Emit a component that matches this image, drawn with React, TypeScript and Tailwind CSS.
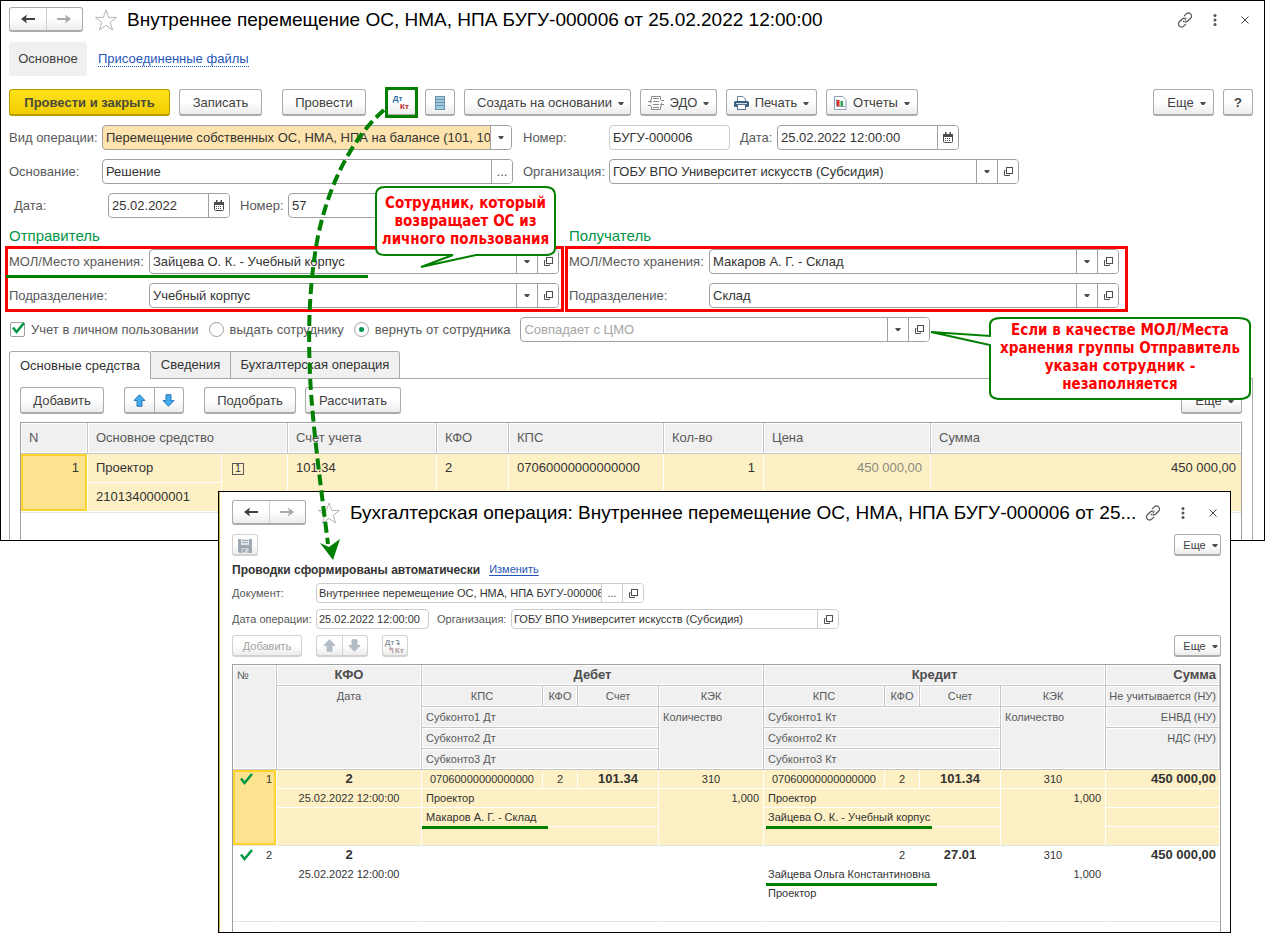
import { useState, type ReactNode } from "react";
import clsx from "clsx";

type Addon = "drop" | "open" | "dots" | "calendar";

/* ---------- icons ---------- */

function Chevron() {
  return (
    <svg width="6" height="3" viewBox="0 0 6 3" aria-hidden="true" className="shrink-0">
      <path d="M0 0h6L4 3H2z" fill="#4d4d4d" />
    </svg>
  );
}

function OpenIcon() {
  return (
    <svg width="9" height="9" viewBox="0 0 9 9" fill="none" stroke="#4d4d4d" aria-hidden="true">
      <rect x="2.500" y=".5" width="6" height="6" />
      <path d="M1.500 3.500H.5v5h5V7.500" />
    </svg>
  );
}

function CalendarIcon() {
  return (
    <svg width="10" height="11" viewBox="0 0 10 11" aria-hidden="true">
      <rect x=".5" y="2.500" width="9" height="8" rx="1" fill="#fff" stroke="#4d4d4d" />
      <path d="M0 2h10v3H0zM2 0h1.500v3H2zM6.500 0H8v3H6.500z" fill="#4d4d4d" />
      <path d="M2 6.500h6M2 8.500h6" stroke="#4d4d4d" strokeDasharray="1 1" />
    </svg>
  );
}

function NavArrow({ muted, flip }: { muted?: boolean; flip?: boolean }) {
  return (
    <svg width="14" height="10" viewBox="0 0 14 10" aria-hidden="true" className={clsx(flip && "rotate-180")}>
      <path d="M14 4v2H5l1 3.500L0 5 6 .5 5 4z" fill={muted ? "#a9a9a9" : "#404040"} />
    </svg>
  );
}

function Star() {
  return (
    <svg width="24" height="24" viewBox="0 0 24 24" aria-hidden="true" className="shrink-0">
      <path
        d="M12 2l2.600 7.400H22.500l-6.300 4.900 2.400 7.700L12 17.400 5.400 22l2.400-7.700L1.500 9.400h7.900z"
        fill="#fff"
        stroke="#b4b4b4"
      />
    </svg>
  );
}

function LinkIcon() {
  return (
    <svg width="16" height="16" viewBox="0 0 16 16" fill="none" stroke="#555" strokeWidth="1.200" aria-hidden="true">
      <path d="M7 4.200l2.300-2.300a2.900 2.900 0 0 1 4.300 0 2.900 2.900 0 0 1 0 4.300L10.700 9a2.900 2.900 0 0 1-3.200.6" />
      <path d="M9 11.800l-2.300 2.300a2.900 2.900 0 0 1-4.300 0 2.900 2.900 0 0 1 0-4.300L5.300 7a2.900 2.900 0 0 1 3.200-.6" />
      <path d="M6 10l4-4" strokeDasharray="1.500 1" />
    </svg>
  );
}

function MoveArrow({ down, muted }: { down?: boolean; muted?: boolean }) {
  return (
    <svg width="13" height="13" viewBox="0 0 13 13" aria-hidden="true" className={clsx(down && "rotate-180")}>
      <path
        d="M6.500.7L12 6.500H9v5.800H4V6.500H1z"
        fill={muted ? "#b3bcc4" : "#42aaf0"}
        stroke={muted ? "#b3bcc4" : "#2f78b5"}
      />
    </svg>
  );
}

function ListIcon() {
  return (
    <svg width="10" height="14" viewBox="0 0 10 14" aria-hidden="true">
      <path d="M0 0h10v14H0z" fill="#a3cbe0" />
      <path d="M0 .5h10M0 3.500h10M0 6.500h10M0 9.500h10M0 13.500h10M.5 0v14M9.500 0v14" stroke="#6b93ad" />
    </svg>
  );
}

function ExchangeIcon() {
  return (
    <svg width="16" height="14" viewBox="0 0 16 14" fill="none" stroke="#8c8c8c" aria-hidden="true">
      <path d="M3.500 4V.5h9V4M3.500 10v3.500h9V10M5 2.500h6M5 11.500h6M5 5.500h6M5 8.500h6" />
      <path d="M0 5.500h3M13 4.500h3M0 9.500h3M13 8.500h3" />
      <path d="M2 3.500l2 2-2 2zM14 6.500l-2 2 2 2z" fill="#8c8c8c" stroke="none" />
    </svg>
  );
}

function PrinterIcon() {
  return (
    <svg width="15" height="14" viewBox="0 0 15 14" aria-hidden="true">
      <path d="M3.500 5V.5h5.500l2.500 2.500v2" fill="#fff" stroke="#6c8296" />
      <rect x="0" y="5" width="15" height="6" rx="1.500" fill="#3d5f80" />
      <path d="M2 7.500h11" stroke="#cfdbe6" />
      <rect x="3.500" y="8.500" width="8" height="5" fill="#fff" stroke="#56728d" />
    </svg>
  );
}

function ChartIcon() {
  return (
    <svg width="13" height="14" viewBox="0 0 13 14" aria-hidden="true">
      <path d="M.5.5h8.500l3 3v10H.5z" fill="#fff" stroke="#8ba2b3" />
      <path d="M3 4h2.500v6H3z" fill="#e22d1f" />
      <path d="M6.500 5H9v5H6.500z" fill="#22a04a" />
      <path d="M2.500 3v7.500H11" fill="none" stroke="#8ba2b3" />
    </svg>
  );
}

function SaveIcon() {
  return (
    <svg width="14" height="14" viewBox="0 0 14 14" aria-hidden="true">
      <path d="M0 0h14v14H1.500L0 12.500z" fill="#9fa9b3" />
      <path d="M3 0h8v6H3z" fill="#e3e7ea" />
      <path d="M4 1.500h6M4 3.500h6" stroke="#9fa9b3" />
      <path d="M3.500 9h7v5h-7z" fill="#c9d0d6" />
      <path d="M5 10h2v3H5z" fill="#9fa9b3" />
    </svg>
  );
}

function CheckMark({ className }: { className?: string }) {
  return (
    <svg width="13" height="12" viewBox="0 0 13 12" aria-hidden="true" className={className}>
      <path d="M1 5.500l3.500 4.500L12 1" fill="none" stroke="#009646" strokeWidth="2.500" />
    </svg>
  );
}

/* ---------- controls ---------- */

interface BtnProps {
  children: ReactNode;
  className?: string;
  drop?: boolean;
  small?: boolean;
  disabled?: boolean;
  label?: string;
}

function Btn({ children, className, drop, small, disabled, label }: BtnProps) {
  return (
    <button
      type="button"
      aria-label={label}
      disabled={disabled}
      className={clsx(
        "flex shrink-0 items-center justify-center gap-1.5 rounded-[3px] border border-b-2 bg-linear-to-b from-white from-50% to-[#ececec] pt-0.5 whitespace-nowrap",
        small ? "h-[22px] text-[11px]" : "h-[27px] text-[13px]",
        disabled ? "border-[#d2d2d2] text-[#a3a3a3]" : "border-[#ababab] text-[#404040]",
        className,
      )}
    >
      {children}
      {drop && <Chevron />}
    </button>
  );
}

const ADDON_LABEL: Record<Addon, string> = {
  drop: "Выбрать из списка",
  open: "Открыть",
  dots: "Выбрать",
  calendar: "Календарь",
};

interface FieldProps {
  id: string;
  label?: string;
  value: string;
  /** Widths of the caption and of the box, as full class names. */
  labelClass?: string;
  boxClass: string;
  addons?: Addon[];
  small?: boolean;
  light?: boolean;
  accent?: boolean;
  muted?: boolean;
}

function Field({ id, label, value, labelClass, boxClass, addons = [], small, light, accent, muted }: FieldProps) {
  const border = light ? "border-[#cccccc]" : "border-[#a0a0a0]";
  const control = clsx(
    "h-full w-full min-w-0 flex-1 appearance-none overflow-hidden bg-transparent text-clip outline-none",
    small ? "pl-0.5" : "pl-[3px]",
    muted ? "text-[#a6a6a6]" : "text-[#333333]",
  );
  return (
    <div className={clsx("flex shrink-0 items-center", small ? "text-[11px]" : "text-[13px]")}>
      {label && (
        <label htmlFor={id} className={clsx("shrink-0 whitespace-nowrap text-[#595959]", labelClass)}>
          {label}
        </label>
      )}
      <div
        className={clsx(
          "flex shrink-0 overflow-hidden rounded-[4px] border",
          border,
          small ? "h-5" : "h-[25px]",
          accent ? "bg-[#fde3ad]" : "bg-white",
          boxClass,
        )}
      >
        {addons.includes("drop") ? (
          <select id={id} aria-label={label ?? value} className={control}>
            <option>{value}</option>
          </select>
        ) : (
          <input id={id} aria-label={label ?? value} defaultValue={value} className={control} />
        )}
        {addons.map((a) => (
          <button
            key={a}
            type="button"
            aria-label={ADDON_LABEL[a]}
            className={clsx("flex w-[21px] shrink-0 items-center justify-center border-l bg-white text-[#4d4d4d]", border)}
          >
            {a === "drop" && <Chevron />}
            {a === "open" && <OpenIcon />}
            {a === "dots" && "..."}
            {a === "calendar" && <CalendarIcon />}
          </button>
        ))}
      </div>
    </div>
  );
}

function WindowHeader({ title }: { title: string }) {
  return (
    <header className="flex h-[25px] items-center">
      <div className="flex h-full w-[74px] shrink-0 overflow-hidden rounded-[3px] border border-b-2 border-[#ababab] bg-linear-to-b from-white from-50% to-[#ececec]">
        <button type="button" aria-label="Назад" className="flex flex-1 items-center justify-center border-r border-[#cfcfcf]">
          <NavArrow />
        </button>
        <button type="button" aria-label="Вперед" className="flex flex-1 items-center justify-center">
          <NavArrow muted flip />
        </button>
      </div>
      <button type="button" aria-label="В избранное" className="mr-[9px] ml-[11px]">
        <Star />
      </button>
      <h1 className="min-w-0 flex-1 text-[19px] leading-6 whitespace-nowrap text-black">{title}</h1>
      <button type="button" aria-label="Ссылка" className="flex w-[30px] shrink-0 justify-center">
        <LinkIcon />
      </button>
      <button type="button" aria-label="Меню" className="flex w-[30px] shrink-0 justify-center">
        <svg width="4" height="12" viewBox="0 0 4 12" fill="#555" aria-hidden="true">
          <circle cx="2" cy="1.500" r="1.500" />
          <circle cx="2" cy="6" r="1.500" />
          <circle cx="2" cy="10.500" r="1.500" />
        </svg>
      </button>
      <button type="button" aria-label="Закрыть" className="flex w-[30px] shrink-0 justify-center">
        <svg width="8" height="8" viewBox="0 0 8 8" stroke="#444" aria-hidden="true">
          <path d="M.5.5l7 7M7.500.5l-7 7" />
        </svg>
      </button>
    </header>
  );
}

function MovePair({ small, muted }: { small?: boolean; muted?: boolean }) {
  return (
    <div
      className={clsx(
        "flex shrink-0 rounded-[3px] border border-b-2 bg-linear-to-b from-white from-50% to-[#ececec]",
        small ? "h-[22px] w-[52px]" : "h-[27px] w-[60px]",
        muted ? "border-[#d2d2d2]" : "border-[#ababab]",
      )}
    >
      <button
        type="button"
        aria-label="Вверх"
        disabled={muted}
        className={clsx("flex flex-1 items-center justify-center border-r", muted ? "border-[#d2d2d2]" : "border-[#ababab]")}
      >
        <MoveArrow muted={muted} />
      </button>
      <button type="button" aria-label="Вниз" disabled={muted} className="flex flex-1 items-center justify-center">
        <MoveArrow down muted={muted} />
      </button>
    </div>
  );
}

/* ---------- document window ---------- */

function PartyGroup({ id, place, unit, className }: { id: string; place: string; unit: string; className?: string }) {
  return (
    <div className={clsx("relative flex flex-col gap-[9px] border-3 border-[#ff0000] pb-px pl-px", className)}>
      <Field id={`${id}-place`} label="МОЛ/Место хранения:" value={place} labelClass="w-[140px]" boxClass="w-[410px]" addons={["drop", "open"]} />
      <Field id={`${id}-unit`} label="Подразделение:" value={unit} labelClass="w-[140px]" boxClass="w-[410px]" addons={["drop", "open"]} />
    </div>
  );
}

function PersonalUse() {
  const [mode, setMode] = useState("return");
  const modes = [
    { id: "issue", text: "выдать сотруднику" },
    { id: "return", text: "вернуть от сотрудника" },
  ];
  return (
    <div className="mt-[5px] flex h-[25px] items-center text-[13px] whitespace-nowrap text-[#595959]">
      <label className="ml-px flex items-center gap-1.5">
        <span className="relative flex">
          <input
            type="checkbox"
            defaultChecked
            className="peer size-[15px] appearance-none rounded-[2px] border border-[#a0a0a0] bg-white"
          />
          <CheckMark className="pointer-events-none absolute top-0 left-0.5 hidden peer-checked:block" />
        </span>
        Учет в личном пользовании
      </label>
      {modes.map((m) => (
        <label key={m.id} className="ml-[10px] flex items-center gap-1.5">
          <span className="relative flex items-center justify-center">
            <input
              type="radio"
              name="mode"
              checked={mode === m.id}
              onChange={() => setMode(m.id)}
              className="peer size-[15px] appearance-none rounded-full border border-[#a0a0a0] bg-white"
            />
            <span className="pointer-events-none absolute hidden size-[5px] rounded-full bg-[#009646] peer-checked:block" />
          </span>
          {m.text}
        </label>
      ))}
      <div className="ml-[10px]">
        <Field id="cmo" value="Совпадает с ЦМО" boxClass="w-[410px]" addons={["drop", "open"]} muted />
      </div>
    </div>
  );
}

function AssetsTable() {
  const th = "h-[31px] border-r border-b border-[#c6c6c6] bg-[#f0f0f0] px-2 text-left font-normal text-[#595959] inset-shadow-[0_0_0_1px_#fff]";
  const cell = "border-b border-white bg-[#fdf0c4] align-top leading-7";
  const td = clsx(cell, "border-r px-2 text-[#333333]");
  return (
    <div className="mt-2 border-x border-t border-[#a0a0a0]">
      <table className="w-full table-fixed border-separate border-spacing-0 text-[13px]">
        <colgroup>
          <col className="w-[67px]" />
          <col className="w-[134px]" />
          <col className="w-[66px]" />
          <col className="w-[149px]" />
          <col className="w-[72px]" />
          <col className="w-[155px]" />
          <col className="w-[100px]" />
          <col className="w-[167px]" />
          <col />
        </colgroup>
        <thead>
          <tr>
            <th className={th}>N</th>
            <th className={th} colSpan={2}>Основное средство</th>
            <th className={th}>Счет учета</th>
            <th className={th}>КФО</th>
            <th className={th}>КПС</th>
            <th className={th}>Кол-во</th>
            <th className={th}>Цена</th>
            <th className={clsx(th, "border-r-0")}>Сумма</th>
          </tr>
        </thead>
        <tbody>
          <tr>
            <td
              rowSpan={2}
              className="border-r border-b border-white bg-[#fde38f] px-2 text-right align-top leading-7 text-[#333333] inset-shadow-[0_0_0_2px_#ffd42a]"
            >
              1
            </td>
            <td className={td}>Проектор</td>
            <td rowSpan={2} className={td}>
              <span className="ml-0.5 inline-block w-3 border border-[#595959] text-center text-[10px] leading-[10px]">1</span>
            </td>
            <td rowSpan={2} className={td}>101.34</td>
            <td rowSpan={2} className={td}>2</td>
            <td rowSpan={2} className={td}>07060000000000000</td>
            <td rowSpan={2} className={clsx(td, "text-right")}>1</td>
            <td rowSpan={2} className={clsx(cell, "border-r px-2 text-right text-[#8a8a80]")}>450 000,00</td>
            <td rowSpan={2} className={clsx(cell, "pr-[5px] text-right text-[#333333]")}>450 000,00</td>
          </tr>
          <tr>
            <td className={td}>2101340000001</td>
          </tr>
        </tbody>
      </table>
      <div className="h-7 border-t border-[#e4e4e4]" />
    </div>
  );
}

function DocumentWindow() {
  return (
    <section className="border border-black bg-white">
      <div className="pt-1.5 pr-1 pl-2">
        <WindowHeader title="Внутреннее перемещение ОС, НМА, НПА БУГУ-000006 от 25.02.2022 12:00:00" />
      </div>
      <div className="pr-[11px] pl-2">
        <nav className="mt-[10px] flex h-[34px] items-center gap-[11px] text-[13px]">
          <span className="flex h-full w-[78px] items-center justify-center rounded-[4px] bg-[#f0f0f0] text-[#404040]">Основное</span>
          <a href="#files" className="border-b border-dotted border-[#1f57b8] leading-[15px] text-[#1f57b8]">
            Присоединенные файлы
          </a>
        </nav>

        <div className="mt-[13px] flex gap-[9px]">
          <button
            type="button"
            className="h-[27px] w-[161px] rounded-[3px] border border-b-2 border-[#b59a00] bg-linear-to-b from-[#ffe31a] to-[#f0cd00] pt-0.5 text-[13px] font-bold whitespace-nowrap text-[#4a4a3a]"
          >
            Провести и закрыть
          </button>
          <Btn className="w-[83px]">Записать</Btn>
          <Btn className="ml-[11px] w-[84px]">Провести</Btn>
          <div className="ml-3 flex shrink-0 outline-3 -outline-offset-1 outline-[#007f00]">
            <Btn label="Проводки Дт/Кт" className="w-[29px]">
              <span className="flex flex-col text-[8px] leading-[8px] font-bold">
                <span className="pr-2 text-[#2f6ea3]">Дт</span>
                <span className="pl-1.5 text-[#c0261c]">Кт</span>
              </span>
            </Btn>
          </div>
          <Btn label="Список" className="w-[30px]"><ListIcon /></Btn>
          <Btn drop className="w-[167px] pl-1.5">Создать на основании</Btn>
          <Btn drop className="w-[77px]"><ExchangeIcon />ЭДО</Btn>
          <Btn drop className="w-[91px]"><PrinterIcon />Печать</Btn>
          <Btn drop className="w-[92px]"><ChartIcon />Отчеты</Btn>
          <div className="flex-1" />
          <Btn drop className="w-[61px] pl-1.5">Еще</Btn>
          <Btn label="Справка" className="w-[30px] font-bold">?</Btn>
        </div>

        <div className="mt-[9px] flex flex-col gap-[9px]">
          <div className="flex">
            <div className="w-[514px] shrink-0">
              <Field
                id="kind"
                label="Вид операции:"
                value="Перемещение собственных ОС, НМА, НПА на балансе (101, 102, 103)"
                labelClass="w-[93px]"
                boxClass="w-[410px]"
                addons={["drop"]}
                accent
              />
            </div>
            <Field id="number" label="Номер:" value="БУГУ-000006" labelClass="w-[86px]" boxClass="mr-[10px] w-[121px]" light />
            <Field id="date" label="Дата:" value="25.02.2022 12:00:00" labelClass="w-[37px]" boxClass="w-[182px]" addons={["calendar"]} />
          </div>
          <div className="flex">
            <div className="w-[514px] shrink-0">
              <Field id="basis" label="Основание:" value="Решение" labelClass="w-[93px]" boxClass="w-[411px]" addons={["dots"]} />
            </div>
            <Field
              id="org"
              label="Организация:"
              value="ГОБУ ВПО Университет искусств (Субсидия)"
              labelClass="w-[86px]"
              boxClass="w-[410px]"
              addons={["drop", "open"]}
            />
          </div>
          <div className="flex gap-[10px] pl-[5px]">
            <Field id="basis-date" label="Дата:" value="25.02.2022" labelClass="w-[94px]" boxClass="w-[122px]" addons={["calendar"]} />
            <Field id="basis-number" label="Номер:" value="57" labelClass="w-[48px]" boxClass="w-[224px]" />
          </div>
        </div>

        <div className="flex h-7 items-center pt-2 text-[15px] leading-5 text-[#009646]">
          <h2 className="w-[560px] shrink-0">Отправитель</h2>
          <h2>Получатель</h2>
        </div>
        <div className="-ml-1 flex gap-px">
          <div className="relative">
            <PartyGroup id="from" place="Зайцева О. К. - Учебный корпус" unit="Учебный корпус" className="w-[559px]" />
            <div className="absolute top-[29px] left-px h-[3px] w-[362px] bg-[#007f00]" />
          </div>
          <PartyGroup id="to" place="Макаров А. Г. - Склад" unit="Склад" className="w-[563px]" />
        </div>

        <PersonalUse />

        <div role="tablist" className="mt-[9px] flex h-7 text-[13px] whitespace-nowrap text-[#333333]">
          <button type="button" role="tab" aria-selected="true" className="w-[142px] rounded-t-[3px] border border-b-0 border-[#a9a9a9] bg-white">
            Основные средства
          </button>
          <button type="button" role="tab" aria-selected="false" className="w-20 border-t border-r border-b border-[#a9a9a9] bg-[#f0f0f0]">
            Сведения
          </button>
          <button type="button" role="tab" aria-selected="false" className="w-[169px] rounded-tr-[3px] border-t border-r border-b border-[#a9a9a9] bg-[#f0f0f0]">
            Бухгалтерская операция
          </button>
          <div className="flex-1 border-b border-[#a9a9a9]" />
        </div>
        <div role="tabpanel" className="border-x border-[#a9a9a9] px-[10px] pt-2">
          <div className="flex">
            <Btn className="mr-5 w-[84px]">Добавить</Btn>
            <MovePair />
            <Btn className="mr-[9px] ml-5 w-[92px]">Подобрать</Btn>
            <Btn className="w-[96px]">Рассчитать</Btn>
            <div className="flex-1" />
            <Btn drop className="w-[61px] pl-1.5">Еще</Btn>
          </div>
          <AssetsTable />
        </div>
      </div>
    </section>
  );
}

/* ---------- postings window ---------- */

interface Side {
  kps?: string;
  kfo?: string;
  account?: string;
  kek?: string;
  qty?: string;
  sub: string[];
  /** Index of the analytics line that is underlined, with the classes of the underline. */
  mark?: { line: number; className: string };
}

interface Posting {
  no: number;
  kfo: string;
  date: string;
  debit: Side;
  credit: Side;
  sum: string;
}

const POSTINGS: Posting[] = [
  {
    no: 1,
    kfo: "2",
    date: "25.02.2022 12:00:00",
    debit: {
      kps: "07060000000000000",
      kfo: "2",
      account: "101.34",
      kek: "310",
      qty: "1,000",
      sub: ["Проектор", "Макаров А. Г. - Склад", ""],
      mark: { line: 1, className: "left-0 w-[126px]" },
    },
    credit: {
      kps: "07060000000000000",
      kfo: "2",
      account: "101.34",
      kek: "310",
      qty: "1,000",
      sub: ["Проектор", "Зайцева О. К. - Учебный корпус", ""],
      mark: { line: 1, className: "left-0.5 w-[166px]" },
    },
    sum: "450 000,00",
  },
  {
    no: 2,
    kfo: "2",
    date: "25.02.2022 12:00:00",
    debit: { sub: ["", "", ""] },
    credit: {
      kfo: "2",
      account: "27.01",
      kek: "310",
      qty: "1,000",
      sub: ["Зайцева Ольга Константиновна", "Проектор", ""],
      mark: { line: 0, className: "left-0.5 w-[171px]" },
    },
    sum: "450 000,00",
  },
];

function SubCell({ side, line, className }: { side: Side; line: number; className: string }) {
  return (
    <td colSpan={3} className={clsx(className, "relative pl-1")}>
      {side.sub[line]}
      {side.mark?.line === line && (
        <span className={clsx("absolute top-[18px] z-10 h-[3px] bg-[#007f00]", side.mark.className)} />
      )}
    </td>
  );
}

function PostingRows({ posting, selected }: { posting: Posting; selected: boolean }) {
  const base = "h-[19px] border-b p-0 leading-[18px] text-[#333333]";
  const fill = selected ? "bg-[#fdf0c4]" : "bg-white";
  const right = selected ? "border-r border-r-white" : "border-r border-r-transparent";
  const td = clsx(base, fill, right, selected ? "border-b-white" : "border-b-transparent");
  const end = clsx(base, fill, right, "border-b-[#e4e4e4]");
  const center = clsx(td, "text-center");
  const strong = "text-[13px] font-bold";
  const sides = [posting.debit, posting.credit];
  return (
    <tbody>
      <tr>
        <td
          rowSpan={4}
          className={clsx(
            base,
            right,
            "border-b-[#e4e4e4] align-top",
            selected && "bg-[#fde38f] inset-shadow-[0_0_0_2px_#ffd42a]",
          )}
        >
          <div className="flex items-center justify-between pr-1 pl-[7px]">
            <CheckMark />
            {posting.no}
          </div>
        </td>
        <td className={clsx(center, strong)}>{posting.kfo}</td>
        {sides.map((s, i) => [
          <td key={`kps${i}`} className={center}>{s.kps}</td>,
          <td key={`kfo${i}`} className={center}>{s.kfo}</td>,
          <td key={`acc${i}`} className={clsx(center, strong)}>{s.account}</td>,
          <td key={`kek${i}`} className={center}>{s.kek}</td>,
        ])}
        <td className={clsx(td, strong, "pr-[3px] text-right")}>{posting.sum}</td>
      </tr>
      {[0, 1, 2].map((n) => (
        <tr key={n}>
          {n === 0 && <td className={center}>{posting.date}</td>}
          {n === 1 && <td rowSpan={2} className={end} />}
          {sides.map((s, i) => [
            <SubCell key={`sub${i}`} side={s} line={n} className={n === 2 ? end : td} />,
            n === 0 && (
              <td key={`qty${i}`} rowSpan={3} className={clsx(end, "pr-1 text-right align-top")}>{s.qty}</td>
            ),
          ])}
          <td className={n === 2 ? end : td} />
        </tr>
      ))}
    </tbody>
  );
}

function PostingsTable() {
  const base = "h-[21px] border-r border-b border-[#c6c6c6] bg-[#f0f0f0] p-0 align-top leading-5 inset-shadow-[0_0_0_1px_#fff]";
  const th = clsx(base, "text-center font-normal text-[#595959]");
  const bold = clsx(base, "text-[13px] font-bold text-[#4d4d4d]");
  const left = clsx(base, "pl-1 text-left font-normal text-[#595959]");
  const last = clsx(base, "pr-[3px] text-right font-normal text-[#595959]");
  return (
    <div className="mt-[7px] border-t border-l border-[#a0a0a0] border-r-[#a0a0a0]">
      <table className="w-full table-fixed border-separate border-spacing-0 border-r border-[#a0a0a0] text-[11px] whitespace-nowrap">
        <colgroup>
          <col className="w-[44px]" />
          <col className="w-[145px]" />
          <col className="w-[121px]" />
          <col className="w-[35px]" />
          <col className="w-[81px]" />
          <col className="w-[105px]" />
          <col className="w-[121px]" />
          <col className="w-[35px]" />
          <col className="w-[81px]" />
          <col className="w-[105px]" />
          <col />
        </colgroup>
        <thead>
          <tr>
            <th rowSpan={5} className={left}>№</th>
            <th className={clsx(bold, "text-center")}>КФО</th>
            <th colSpan={4} className={clsx(bold, "text-center")}>Дебет</th>
            <th colSpan={4} className={clsx(bold, "text-center")}>Кредит</th>
            <th className={clsx(bold, "pr-[3px] text-right")}>Сумма</th>
          </tr>
          <tr>
            <th rowSpan={4} className={th}>Дата</th>
            {["Дт", "Кт"].map((s) => [
              <th key={`kps${s}`} className={th}>КПС</th>,
              <th key={`kfo${s}`} className={th}>КФО</th>,
              <th key={`acc${s}`} className={th}>Счет</th>,
              <th key={`kek${s}`} className={th}>КЭК</th>,
            ])}
            <th className={last}>Не учитывается (НУ)</th>
          </tr>
          <tr>
            <th colSpan={3} className={left}>Субконто1 Дт</th>
            <th rowSpan={3} className={left}>Количество</th>
            <th colSpan={3} className={left}>Субконто1 Кт</th>
            <th rowSpan={3} className={left}>Количество</th>
            <th className={last}>ЕНВД (НУ)</th>
          </tr>
          <tr>
            <th colSpan={3} className={left}>Субконто2 Дт</th>
            <th colSpan={3} className={left}>Субконто2 Кт</th>
            <th rowSpan={2} className={last}>НДС (НУ)</th>
          </tr>
          <tr>
            <th colSpan={3} className={left}>Субконто3 Дт</th>
            <th colSpan={3} className={left}>Субконто3 Кт</th>
          </tr>
        </thead>
        {POSTINGS.map((p) => (
          <PostingRows key={p.no} posting={p} selected={p.no === 1} />
        ))}
      </table>
      <div className="h-[10px] border-r border-[#a0a0a0]" />
    </div>
  );
}

function PostingsWindow() {
  return (
    <section className="absolute top-[491px] left-[218px] w-[1013px] border border-black bg-white">
      <div className="border-l border-[#c9b458] pt-2 pl-3">
        <div className="pr-0.5">
          <WindowHeader title="Бухгалтерская операция: Внутреннее перемещение ОС, НМА, НПА БУГУ-000006 от 25..." />
        </div>
        <div className="pr-[9px]">
          <div className="mt-[9px] flex justify-between">
            <Btn small disabled label="Записать" className="w-[26px]"><SaveIcon /></Btn>
            <Btn small drop className="w-[47px] pl-1.5">Еще</Btn>
          </div>
          <div className="flex h-[27px] items-center gap-[9px]">
            <h2 className="text-[12px] font-bold text-[#333333]">Проводки сформированы автоматически</h2>
            <a href="#edit" className="text-[11px] text-[#1f57b8] underline underline-offset-2">Изменить</a>
          </div>
          <Field
            id="doc"
            label="Документ:"
            value="Внутреннее перемещение ОС, НМА, НПА БУГУ-000006 от 25.02.2022 12:00:00"
            labelClass="w-[84px]"
            boxClass="w-[328px]"
            addons={["dots", "open"]}
            small
            light
          />
          <div className="mt-1.5 flex gap-2">
            <Field id="op-date" label="Дата операции:" value="25.02.2022 12:00:00" labelClass="w-[84px]" boxClass="w-[113px]" small light />
            <Field
              id="op-org"
              label="Организация:"
              value="ГОБУ ВПО Университет искусств (Субсидия)"
              labelClass="w-[74px]"
              boxClass="w-[328px]"
              addons={["open"]}
              small
              light
            />
          </div>
          <div className="mt-1.5 flex gap-[14px]">
            <Btn small disabled className="w-[70px]">Добавить</Btn>
            <MovePair small muted />
            <Btn small disabled label="Дт/Кт" className="w-[26px]">
              <span className="flex flex-col text-[8px] leading-[8px] font-bold">
                <span className="pr-1 text-[#8f9aa3]">Дт↴</span>
                <span className="pl-0.5 text-[#b09a98]">↰Кт</span>
              </span>
            </Btn>
            <div className="flex-1" />
            <Btn small drop className="w-[47px] pl-1.5">Еще</Btn>
          </div>
          <PostingsTable />
        </div>
      </div>
    </section>
  );
}

/* ---------- annotations over the windows ---------- */

function FlowArrow() {
  return (
    <svg width="100" height="470" viewBox="310 100 100 470" aria-hidden="true" className="pointer-events-none absolute top-[100px] left-[310px] overflow-visible">
      <path
        d="M384 110C352 138 329 184 318 236C309 284 308 330 310 375C312 420 320 480 328 544"
        fill="none"
        stroke="#007f00"
        strokeWidth="4"
        strokeDasharray="11 5"
      />
      <path d="M333 560L320 543l9 4 11-8z" fill="#007f00" />
    </svg>
  );
}

function Callouts() {
  const text = "relative text-center font-['DejaVu_Sans_Condensed','DejaVu_Sans',sans-serif] text-[15px] leading-[18px] font-bold whitespace-nowrap text-[#ff0000]";
  return (
    <>
      <div className="absolute top-[186px] left-[375px] w-[181px] py-2">
        <svg width="181" height="82" viewBox="0 0 181 82" aria-hidden="true" className="absolute top-0 left-0">
          <path
            d="M10 1H170q10 0 10 8V62q0 7-10 7H101L46 81 78 69H10Q1 69 1 62V9Q1 1 10 1z"
            fill="#fff"
            stroke="#007f00"
            strokeWidth="2"
          />
        </svg>
        <p className={text}>
          Сотрудник, который
          <br />
          возвращает ОС из
          <br />
          личного пользования
        </p>
      </div>
      <div className="absolute top-[317px] left-[989px] w-[262px] py-1">
        <svg width="321" height="83" viewBox="-59 0 321 83" aria-hidden="true" className="absolute top-0 -left-[59px]">
          <path
            d="M12 1H249q12 0 12 7V75q0 7-12 7H12Q1 82 1 75V28L-58 15 1 19V8Q1 1 12 1z"
            fill="#fff"
            stroke="#007f00"
            strokeWidth="2"
          />
        </svg>
        <p className={text}>
          Если в качестве МОЛ/Места
          <br />
          хранения группы Отправитель
          <br />
          указан сотрудник -
          <br />
          незаполняется
        </p>
      </div>
    </>
  );
}

export default function App() {
  return (
    <main className="relative min-h-screen bg-white font-['Liberation_Sans',Arial,sans-serif]">
      <DocumentWindow />
      <PostingsWindow />
      <FlowArrow />
      <Callouts />
    </main>
  );
}
